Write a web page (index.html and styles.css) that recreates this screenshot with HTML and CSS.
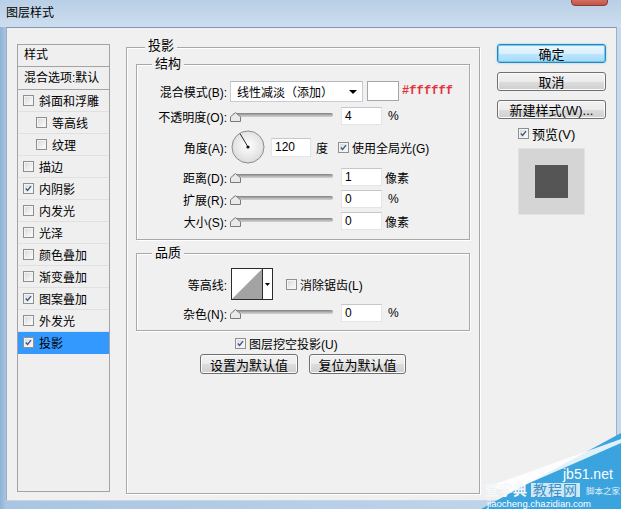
FILE: index.html
```html
<!DOCTYPE html>
<html lang="zh-CN">
<head>
<meta charset="utf-8">
<title>图层样式</title>
<link rel="stylesheet" href="styles.css">
</head>
<body>
<div class="window">
  <div class="titlebar">
    <span class="title">图层样式</span>
    <span class="close"></span>
  </div>
  <div class="client">
    <div class="styles-list">
      <div class="head">样式</div>
      <div class="head head2">混合选项:默认</div>
      <div class="item"><span class="cb"></span>斜面和浮雕</div>
      <div class="item sub"><span class="cb"></span>等高线</div>
      <div class="item sub"><span class="cb"></span>纹理</div>
      <div class="item"><span class="cb"></span>描边</div>
      <div class="item"><span class="cb on"><svg viewBox="0 0 11 11"><path d="M2.2 5.4 L4.4 7.9 L8.6 2.6"/></svg></span>内阴影</div>
      <div class="item"><span class="cb"></span>内发光</div>
      <div class="item"><span class="cb"></span>光泽</div>
      <div class="item"><span class="cb"></span>颜色叠加</div>
      <div class="item"><span class="cb"></span>渐变叠加</div>
      <div class="item"><span class="cb on"><svg viewBox="0 0 11 11"><path d="M2.2 5.4 L4.4 7.9 L8.6 2.6"/></svg></span>图案叠加</div>
      <div class="item"><span class="cb"></span>外发光</div>
      <div class="item selected"><span class="cb on"><svg viewBox="0 0 11 11"><path d="M2.2 5.4 L4.4 7.9 L8.6 2.6"/></svg></span>投影</div>
    </div>

    <div class="main group">
      <span class="legend">投影</span>

      <div class="group struct">
        <span class="legend">结构</span>
        <div class="row r1">
          <span class="label">混合模式(B):</span>
          <div class="select"><span class="sel-text">线性减淡（添加）</span><span class="arrow"></span></div>
          <span class="swatch"></span>
          <span class="hex">#ffffff</span>
        </div>
        <div class="row r2">
          <span class="label">不透明度(O):</span>
          <div class="slider"><span class="track"></span><svg class="thumb" viewBox="0 0 11 10"><polygon points="0.5,9.5 0.5,4.8 5.5,0.6 10.5,4.8 10.5,9.5"/></svg></div>
          <span class="input">4</span>
          <span class="unit pct">%</span>
        </div>
        <div class="row r3">
          <span class="label">角度(A):</span>
          <svg class="dial" viewBox="0 0 34 34">
            <defs><radialGradient id="dg" cx="50%" cy="45%" r="60%"><stop offset="0" stop-color="#ffffff"/><stop offset="1" stop-color="#d9d9d9"/></radialGradient></defs>
            <circle cx="17" cy="17" r="16" fill="url(#dg)" stroke="#8c8c8c"/>
            <line x1="17" y1="17" x2="9" y2="3.5" stroke="#2a2a2a" stroke-width="1"/>
            <circle cx="17" cy="17" r="1.6" fill="#111"/>
          </svg>
          <span class="input angle">120</span>
          <span class="unit">度</span>
          <span class="cb on global"><svg viewBox="0 0 11 11"><path d="M2.2 5.4 L4.4 7.9 L8.6 2.6"/></svg></span>
          <span class="cb-text">使用全局光(G)</span>
        </div>
        <div class="row r4">
          <span class="label">距离(D):</span>
          <div class="slider"><span class="track"></span><svg class="thumb" viewBox="0 0 11 10"><polygon points="0.5,9.5 0.5,4.8 5.5,0.6 10.5,4.8 10.5,9.5"/></svg></div>
          <span class="input">1</span>
          <span class="unit">像素</span>
        </div>
        <div class="row">
          <span class="label">扩展(R):</span>
          <div class="slider"><span class="track"></span><svg class="thumb" viewBox="0 0 11 10"><polygon points="0.5,9.5 0.5,4.8 5.5,0.6 10.5,4.8 10.5,9.5"/></svg></div>
          <span class="input">0</span>
          <span class="unit pct">%</span>
        </div>
        <div class="row">
          <span class="label">大小(S):</span>
          <div class="slider"><span class="track"></span><svg class="thumb" viewBox="0 0 11 10"><polygon points="0.5,9.5 0.5,4.8 5.5,0.6 10.5,4.8 10.5,9.5"/></svg></div>
          <span class="input">0</span>
          <span class="unit">像素</span>
        </div>
      </div>

      <div class="group quality">
        <span class="legend">品质</span>
        <div class="row q1">
          <span class="label">等高线:</span>
          <svg class="contour" viewBox="0 0 42 32">
            <rect x="0.5" y="0.5" width="41" height="31" fill="#fff" stroke="#2b2b2b"/>
            <polygon points="1,31 31,1 31,31" fill="#a3a3a3"/>
            <line x1="31.5" y1="1" x2="31.5" y2="31" stroke="#2b2b2b"/>
            <polygon points="34,15 39,15 36.5,18" fill="#000"/>
          </svg>
          <span class="cb aa"></span>
          <span class="cb-text">消除锯齿(L)</span>
        </div>
        <div class="row q2">
          <span class="label">杂色(N):</span>
          <div class="slider"><span class="track"></span><svg class="thumb" viewBox="0 0 11 10"><polygon points="0.5,9.5 0.5,4.8 5.5,0.6 10.5,4.8 10.5,9.5"/></svg></div>
          <span class="input">0</span>
          <span class="unit pct">%</span>
        </div>
      </div>

      <div class="knockout"><span class="cb on"><svg viewBox="0 0 11 11"><path d="M2.2 5.4 L4.4 7.9 L8.6 2.6"/></svg></span><span class="cb-text">图层挖空投影(U)</span></div>
      <div class="defaults">
        <span class="btn w98">设置为默认值</span>
        <span class="btn w97">复位为默认值</span>
      </div>
    </div>

    <div class="side">
      <span class="btn big ok">确定</span>
      <span class="btn big">取消</span>
      <span class="btn big">新建样式(W)...</span>
      <div class="preview-row"><span class="cb on"><svg viewBox="0 0 11 11"><path d="M2.2 5.4 L4.4 7.9 L8.6 2.6"/></svg></span><span class="cb-text">预览(V)</span></div>
      <div class="preview"><span class="swatch-dark"></span></div>
    </div>
  </div>

  <div class="watermark">
    <svg class="wm-shape" viewBox="0 0 140 80">
      <polygon points="0,80 140,4 140,80" fill="#3ba3de"/>
      <polygon points="6,58 140,10 140,14 30,62" fill="#ffffff" opacity="0.85"/>
    </svg>
    <span class="wm-site">jb51.net</span>
    <span class="wm-cn">查字典</span>
    <span class="wm-box">教程网</span>
    <span class="wm-big">脚本之家</span>
    <span class="wm-url">jiaocheng.chazidian.com</span>
  </div>
</div>
</body>
</html>
```

FILE: styles.css
```css
* { box-sizing: border-box; }

body {
  margin: 0;
  font-family: "Liberation Sans", "Noto Sans CJK SC", sans-serif;
  font-size: 12px;
  color: #000;
  background: #fff;
}

.window {
  position: relative;
  width: 621px;
  height: 509px;
  overflow: hidden;
  background: linear-gradient(to right, #8fb2d6 0, #a9c5e2 6px, #b9d0e8 60%, #c7d9ec 100%);
}

.titlebar {
  height: 27px;
  display: flex;
  align-items: center;
  padding-left: 6px;
  background: linear-gradient(to bottom, #b9cfe6 0%, #c3d6ea 50%, #cddef0 100%);
}

.title {
  line-height: 16px;
  margin-top: -1px;
}

.close {
  position: absolute;
  left: 571px;
  top: -6px;
  width: 37px;
  height: 12px;
  border-radius: 0 0 4px 4px;
  background: linear-gradient(#d98a7e, #c4534a);
  border: 1px solid #8a3b33;
}

.client {
  display: flex;
  align-items: flex-start;
  width: 611px;
  height: 474px;
  margin-left: 6px;
  padding: 16px 0 0 10px;
  background: #f0f0f0;
  border-top: 1px solid #8496ad;
  border-left: 1px solid #9aaec6;
  border-right: 1px solid #9aaec6;
  border-bottom: 1px solid #c9d6e4;
}

/* left style list */
.styles-list {
  width: 93px;
  height: 448px;
  border: 1px solid #a3a3a3;
  background: #efefef;
  flex: none;
}

.head {
  height: 22px;
  line-height: 21px;
  padding-left: 6px;
  border-bottom: 1px solid #a3a3a3;
}

.head2 {
  height: 23px;
  line-height: 22px;
}

.item {
  display: flex;
  align-items: center;
  height: 22px;
  padding-left: 5px;
  border-bottom: 1px solid #e0e0e0;
}

.item.sub { padding-left: 18px; }

.item .cb { margin-right: 5px; }

.item.selected {
  background: #3399ff;
  border-bottom-color: #3399ff;
}

/* checkbox */
.cb {
  display: inline-block;
  flex: none;
  width: 11px;
  height: 11px;
  border: 1px solid #8e8f8f;
  background: linear-gradient(135deg, #d6d6d6 0%, #f3f3f3 70%, #ffffff 100%);
  box-shadow: inset 0 0 0 1px #f4f4f4;
}

.cb svg {
  display: block;
  width: 9px;
  height: 9px;
}

.cb svg path {
  fill: none;
  stroke: #3d5a8c;
  stroke-width: 1.7;
}

.cb-text { margin-left: 3px; }

/* group boxes */
.group {
  position: relative;
  border: 1px solid #a8a8a8;
  box-shadow: 1px 1px 0 #ffffff, inset 1px 1px 0 #ffffff;
}

.legend {
  position: absolute;
  top: -9px;
  left: 16px;
  padding: 0 3px;
  background: #f0f0f0;
  line-height: 16px;
  font-size: 13px;
}

.main {
  flex: none;
  width: 354px;
  height: 447px;
  margin: 3px 0 0 16px;
  padding: 16px 9px 0 9px;
}

.main > .legend { left: 18px; top: -10px; }

.struct {
  height: 176px;
  padding-top: 15px;
}

.struct .legend, .quality .legend { left: 15px; }

.row {
  display: flex;
  align-items: center;
  height: 22px;
  white-space: nowrap;
}

.r2, .r3 { margin-top: 3px; }
.r3 { height: 34px; }
.r4 { margin-top: 2px; }

.label {
  width: 90px;
  flex: none;
  text-align: right;
}

.select {
  display: flex;
  align-items: center;
  justify-content: space-between;
  width: 133px;
  height: 21px;
  margin-left: 3px;
  padding: 0 5px 0 6px;
  background: #fff;
  border: 1px solid #c9cdd3;
  border-top-color: #b4b8bf;
}

.arrow {
  width: 0;
  height: 0;
  border-left: 4px solid transparent;
  border-right: 4px solid transparent;
  border-top: 4px solid #000;
  margin-top: 1px;
}

.swatch {
  width: 32px;
  height: 20px;
  margin-left: 4px;
  background: #fff;
  border: 1px solid #a6a6a6;
}

.hex {
  margin-left: 3px;
  font-family: "Liberation Mono", monospace;
  font-size: 12px;
  font-weight: bold;
  color: #e3323d;
  letter-spacing: 0.1px;
}

.slider {
  position: relative;
  width: 104px;
  height: 12px;
  margin-left: 3px;
  flex: none;
}

.track {
  display: block;
  margin: 3px 0 0 3px;
  width: 100px;
  height: 4px;
  border-radius: 2px;
  background: linear-gradient(#7e7e7e, #b9b9b9 60%, #d0d0d0);
}

.thumb {
  position: absolute;
  left: 0;
  top: 2px;
  width: 11px;
  height: 10px;
}

.thumb polygon {
  fill: #e9e9e9;
  stroke: #7a7a7a;
  stroke-width: 1;
}

.input {
  width: 41px;
  height: 18px;
  margin-left: 7px;
  padding-left: 3px;
  line-height: 16px;
  background: #fff;
  border: 1px solid #e2e5ea;
  border-top-color: #c3c7cd;
}

.unit { margin-left: 3px; }
.unit.pct { margin-left: 6px; }

.dial {
  width: 34px;
  height: 34px;
  margin-left: 4px;
  flex: none;
}

.input.angle {
  width: 40px;
  height: 19px;
  margin-left: 6px;
}

.r3 .unit { margin-left: 5px; }
.global { margin-left: 10px; }

.quality {
  height: 78px;
  margin-top: 13px;
  padding-top: 14px;
}

.q1 { height: 32px; }
.q2 { margin-top: 2px; }

.contour {
  width: 42px;
  height: 32px;
  margin-left: 4px;
  flex: none;
}

.aa { margin-left: 13px; }

.knockout {
  display: flex;
  align-items: center;
  height: 16px;
  margin: 4px 0 0 99px;
}

.defaults {
  display: flex;
  justify-content: center;
  gap: 11px;
  margin-top: 3px;
}

.btn {
  display: flex;
  align-items: center;
  justify-content: center;
  height: 20px;
  border: 1px solid #707070;
  border-radius: 3px;
  background: linear-gradient(#f2f2f2 0%, #ebebeb 50%, #dddddd 51%, #cfcfcf 100%);
  box-shadow: inset 0 0 0 1px #fbfbfb;
  white-space: nowrap;
  font-size: 13px;
}

.w98 { width: 98px; }
.w97 { width: 97px; }

.side {
  display: flex;
  flex-direction: column;
  width: 109px;
  margin-left: 17px;
  flex: none;
}

.btn.big {
  height: 19px;
  width: 109px;
  margin-bottom: 9px;
}

.btn.ok {
  border-color: #3c7fb1;
  background: linear-gradient(#eaf6fd 0%, #d9f0fc 50%, #bee6fd 51%, #a7d9f5 100%);
  box-shadow: inset 0 0 0 1px #62d0f5, 0 0 2px #5fc8ef;
}

.preview-row {
  display: flex;
  align-items: center;
  height: 16px;
  margin: -3px 0 0 21px;
  font-size: 13px;
}

.preview {
  display: flex;
  align-items: center;
  justify-content: center;
  width: 67px;
  height: 67px;
  margin: 7px 0 0 21px;
  background: #d5d5d5;
  border: 1px solid #e2e2e2;
}

.swatch-dark {
  width: 33px;
  height: 33px;
  background: #555555;
}

/* watermark overlay */
.watermark {
  position: absolute;
  left: 481px;
  top: 429px;
  width: 140px;
  height: 80px;
  color: #fff;
  white-space: nowrap;
}

.wm-shape {
  position: absolute;
  left: 0;
  top: 0;
  width: 140px;
  height: 80px;
}

.wm-site {
  position: absolute;
  left: 82px;
  top: 38px;
  font-size: 14px;
  line-height: 14px;
  font-family: "Liberation Sans", sans-serif;
}

.wm-cn {
  position: absolute;
  left: 4px;
  top: 54px;
  font-size: 14px;
  line-height: 14px;
  font-weight: bold;
  color: #f4f8fb;
}

.wm-box {
  position: absolute;
  left: 50px;
  top: 54px;
  padding: 0 2px;
  font-size: 14px;
  line-height: 14px;
  color: #3b8fc6;
  background: rgba(255, 255, 255, 0.75);
  letter-spacing: 1px;
}

.wm-big {
  position: absolute;
  left: 105px;
  top: 57px;
  font-size: 8.5px;
  line-height: 10px;
  color: #e4f2fb;
}

.wm-url {
  position: absolute;
  left: 6px;
  top: 69px;
  font-size: 9.5px;
  line-height: 11px;
  font-family: "Liberation Sans", sans-serif;
}
```
